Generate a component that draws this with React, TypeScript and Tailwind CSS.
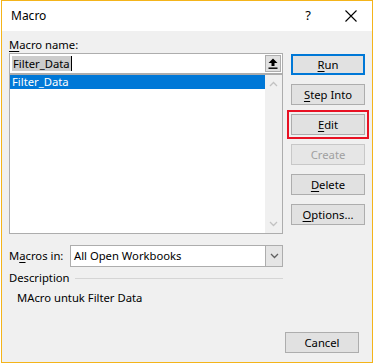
import React from "react";

const font = { fontFamily: '"Segoe UI", "Noto Sans", sans-serif' };

function DialogButton({
  label,
  hotkey,
  rest,
  variant = "normal",
}: {
  label?: string;
  hotkey?: string;
  rest?: string;
  variant?: "normal" | "default" | "disabled" | "focus";
}) {
  const base =
    "flex h-[21px] w-[74px] items-center justify-center bg-[#e1e1e1] text-[11.25px] leading-none";
  const border =
    variant === "default"
      ? "border-2 border-[#0078d7] text-black"
      : variant === "disabled"
      ? "border border-[#c8c8c8] bg-[#e6e6e6] text-[#a0a0a0]"
      : "border border-[#adadad] text-black";
  const outline =
    variant === "focus" ? "outline-2 outline-offset-2 outline-[#e81123]" : "";
  return (
    <div className={`${base} ${border} ${outline}`}>
      {hotkey && <span className="underline underline-offset-2">{hotkey}</span>}
      {rest ?? label}
    </div>
  );
}

function Chevron({ up, color }: { up?: boolean; color: string }) {
  return (
    <svg width="9" height="6" viewBox="0 0 9 6">
      <path
        d={up ? "M1 5 L4.5 1.5 L8 5" : "M1 1 L4.5 4.5 L8 1"}
        fill="none"
        stroke={color}
        strokeWidth="1.3"
      />
    </svg>
  );
}

export default function App() {
  const buttons = [
    { hotkey: "R", rest: "un", variant: "default" as const },
    { hotkey: "S", rest: "tep Into" },
    { hotkey: "E", rest: "dit", variant: "focus" as const },
    { rest: "Create", variant: "disabled" as const },
    { hotkey: "D", rest: "elete" },
    { hotkey: "O", rest: "ptions..." },
  ];

  return (
    <div className="h-[364px] w-[374px] bg-white pl-px" style={font}>
      <div className="flex h-[363px] w-[372px] flex-col border border-[#f4b41a] bg-[#f0f0f0]">
        {/* title bar */}
        <div className="flex h-[30px] shrink-0 items-center bg-white pl-[9px] text-[12px] text-black">
          <span>Macro</span>
          <span className="ml-auto mr-[34px] text-[13px]">?</span>
          <svg width="12" height="12" viewBox="0 0 12 12" className="mr-[15px]">
            <path d="M0.5 0.5 L11.5 11.5 M11.5 0.5 L0.5 11.5" stroke="#000" strokeWidth="1.1" />
          </svg>
        </div>

        {/* body */}
        <div className="flex flex-1 flex-col px-[7px] pt-[6px] text-[11.25px] text-black">
          <div className="flex">
            {/* left column */}
            <div className="flex w-[274px] flex-col">
              <div className="h-[16px] leading-[16px]">
                <span className="underline underline-offset-2">M</span>acro name:
              </div>
              <div className="flex h-[21px] items-center border border-[#adadad] bg-white pl-[2px] pr-px">
                <span className="bg-[#cccccc] px-px leading-[15px]">Filter_Data</span>
                <span className="h-[15px] w-px bg-black" />
                <div className="ml-auto flex h-[17px] w-[16px] items-center justify-center border border-[#adadad] bg-[#e1e1e1]">
                  <svg width="10" height="11" viewBox="0 0 10 11">
                    <path d="M5 0.5 L9.5 5 L6.5 5 L6.5 8 L3.5 8 L3.5 5 L0.5 5 Z" fill="#000" />
                    <rect x="0.5" y="9.5" width="9" height="1.4" fill="#000" />
                  </svg>
                </div>
              </div>
              <div className="flex h-[160px] border border-[#adadad] bg-white">
                <div className="flex-1">
                  <div className="h-[14px] bg-[#0078d7] pl-[2px] leading-[14px] text-white">
                    Filter_Data
                  </div>
                </div>
                <div className="flex w-[17px] flex-col items-center justify-between bg-[#f0f0f0] py-[6px]">
                  <Chevron up color="#c2c2c2" />
                  <Chevron color="#c2c2c2" />
                </div>
              </div>
              <div className="mt-[11px] flex h-[22px] items-center">
                <span className="w-[61px]">
                  M<span className="underline underline-offset-2">a</span>cros in:
                </span>
                <div className="flex h-[22px] flex-1 items-center border border-[#adadad] bg-white pl-[3px]">
                  <span>All Open Workbooks</span>
                  <div className="ml-auto flex h-[20px] w-[17px] items-center justify-center border-l border-[#adadad] bg-[#e5e5e5]">
                    <Chevron color="#606060" />
                  </div>
                </div>
              </div>
              <div className="mt-[3px] flex h-[17px] items-center">
                <span>Description</span>
                <div className="ml-[5px] h-px flex-1 bg-[#d5d5d5]" />
              </div>
              <div className="mt-[3px] h-[16px] pl-[8px] leading-[16px]">MAcro untuk Filter Data</div>
            </div>

            {/* right column */}
            <div className="ml-[8px] flex flex-col gap-[9px] pt-[17px]">
              {buttons.map((b, i) => (
                <DialogButton key={i} hotkey={b.hotkey} rest={b.rest} variant={b.variant} />
              ))}
            </div>
          </div>

          <div className="mt-auto mb-[9px] flex justify-end pr-[6px]">
            <DialogButton rest="Cancel" />
          </div>
        </div>
      </div>
    </div>
  );
}
